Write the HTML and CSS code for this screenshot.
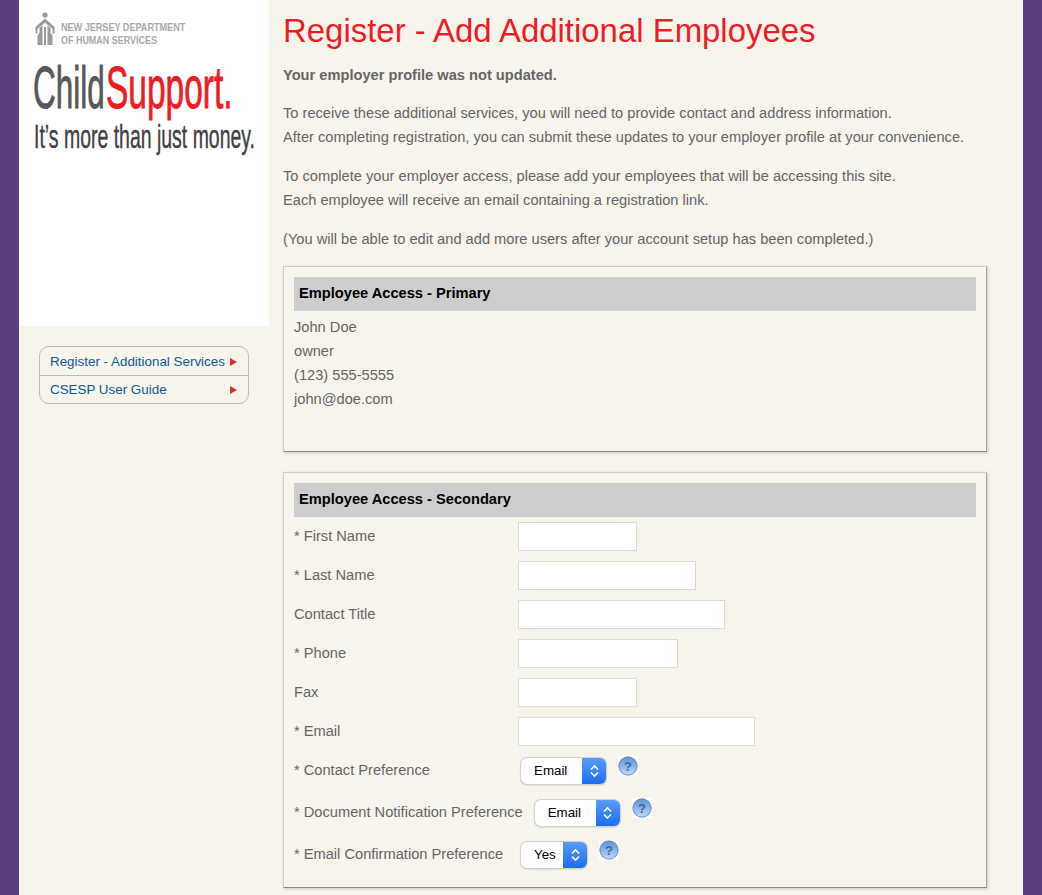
FILE: index.html
```html
<!DOCTYPE html>
<html lang="en">
<head>
<meta charset="utf-8">
<title>Register - Add Additional Employees</title>
<link rel="stylesheet" href="styles.css">
</head>
<body>
<div class="page">
  <aside class="sidebar">
    <div class="logo">
      <svg class="logo-svg" width="250" height="170" viewBox="0 0 250 170">
        <g fill="#9a9a9a">
          <circle cx="26" cy="15" r="2.6"/>
          <path d="M26 18.5 L35.5 27 L35.5 33.5 L33.5 33.5 L33.5 29 L26 22.5 L18.5 29 L18.5 33.5 L16.5 33.5 L16.5 27 Z"/>
          <path d="M23.5 25.5 L23.5 45 L18.5 45 L18.5 35.5 L20.5 33 L20.5 28 Z"/>
          <path d="M28.5 25.5 L28.5 45 L33.5 45 L33.5 35.5 L31.5 33 L31.5 28 Z"/>
          <rect x="25" y="27" width="2" height="18"/>
        </g>
        <text class="dept" transform="translate(42 31) scale(.826 1)">NEW JERSEY DEPARTMENT</text>
        <text class="dept" transform="translate(42 44) scale(.816 1)">OF HUMAN SERVICES</text>
        <text class="child" transform="translate(14 108) scale(.525 1)">Child</text>
        <text class="support" transform="translate(87 108) scale(.558 1)">Support.</text>
        <text class="tagline" transform="translate(15 148) scale(.59 1)">It’s more than just money.</text>
      </svg>
    </div>
    <nav class="side-nav">
      <a class="nav-row" href="#"><span>Register - Additional Services</span><i class="tri"></i></a>
      <a class="nav-row" href="#"><span>CSESP User Guide</span><i class="tri"></i></a>
    </nav>
  </aside>
  <main class="content">
    <h1>Register - Add Additional Employees</h1>
    <p class="warn">Your employer profile was not updated.</p>
    <p class="intro">To receive these additional services, you will need to provide contact and address information.<br>After completing registration, you can submit these updates to your employer profile at your convenience.</p>
    <p class="intro second">To complete your employer access, please add your employees that will be accessing this site.<br>Each employee will receive an email containing a registration link.</p>
    <p class="note">(You will be able to edit and add more users after your account setup has been completed.)</p>

    <section class="box primary">
      <h2>Employee Access - Primary</h2>
      <div class="contact">John Doe<br>owner<br>(123) 555-5555<br>john@doe.com</div>
    </section>

    <section class="box secondary">
      <h2>Employee Access - Secondary</h2>
      <div class="form">
        <label class="row"><span class="lbl">* First Name</span><input class="in w119" type="text"></label>
        <label class="row"><span class="lbl">* Last Name</span><input class="in w178" type="text"></label>
        <label class="row"><span class="lbl">Contact Title</span><input class="in w207" type="text"></label>
        <label class="row"><span class="lbl">* Phone</span><input class="in w160" type="text"></label>
        <label class="row"><span class="lbl">Fax</span><input class="in w119" type="text"></label>
        <label class="row"><span class="lbl">* Email</span><input class="in w237" type="text"></label>

        <div class="row sel-row">
          <span class="lbl">* Contact Preference</span>
          <div class="select s85"><span class="val">Email</span><span class="stepper"><svg width="11" height="16" viewBox="0 0 11 16"><path d="M2 6.5 L5.5 3 L9 6.5 M2 9.5 L5.5 13 L9 9.5" fill="none" stroke="#fff" stroke-width="1.6"/></svg></span></div>
          <svg class="help" width="20" height="20" viewBox="0 0 20 20"><use href="#q"/><text x="10" y="14.5" class="qm">?</text></svg>
        </div>
        <div class="row sel-row">
          <span class="lbl auto">* Document Notification Preference</span>
          <div class="select s85"><span class="val">Email</span><span class="stepper"><svg width="11" height="16" viewBox="0 0 11 16"><path d="M2 6.5 L5.5 3 L9 6.5 M2 9.5 L5.5 13 L9 9.5" fill="none" stroke="#fff" stroke-width="1.6"/></svg></span></div>
          <svg class="help" width="20" height="20" viewBox="0 0 20 20"><use href="#q"/><text x="10" y="14.5" class="qm">?</text></svg>
        </div>
        <div class="row sel-row">
          <span class="lbl">* Email Confirmation Preference</span>
          <div class="select s66"><span class="val">Yes</span><span class="stepper"><svg width="11" height="16" viewBox="0 0 11 16"><path d="M2 6.5 L5.5 3 L9 6.5 M2 9.5 L5.5 13 L9 9.5" fill="none" stroke="#fff" stroke-width="1.6"/></svg></span></div>
          <svg class="help" width="20" height="20" viewBox="0 0 20 20"><use href="#q"/><text x="10" y="14.5" class="qm">?</text></svg>
        </div>
      </div>
    </section>
  </main>
</div>
<svg class="defs" width="0" height="0">
  <defs>
    <linearGradient id="qg" x1="0" y1="0" x2="0" y2="1">
      <stop offset="0" stop-color="#5e93d6"/>
      <stop offset="0.55" stop-color="#8db8e8"/>
      <stop offset="1" stop-color="#c2dbf6"/>
    </linearGradient>
    <g id="q"><circle cx="10" cy="10" r="9.2" fill="url(#qg)" stroke="#4f7fbe" stroke-width="0.8"/></g>
  </defs>
</svg>
</body>
</html>
```
FILE: styles.css
```css
* { box-sizing: border-box; }
html, body { margin: 0; height: 895px; overflow: hidden; }
body { background: #5b4080; font-family: "Liberation Sans", Arial, sans-serif; font-size: 14.65px; color: #666; }
.page { margin: 0 19px; width: 1004px; height: 895px; background: #f7f4ec; display: flex; }
.sidebar { width: 250px; flex: none; }
.logo { height: 326px; background: #fff; }
.logo-svg { display: block; }
.dept { font: bold 11px "Liberation Sans", sans-serif; fill: #a9a9a9; }
.child { font: 60px "Liberation Sans", sans-serif; fill: #58585a; stroke: #58585a; stroke-width: .9; }
.support { font: 60px "Liberation Sans", sans-serif; fill: #ed1c24; stroke: #ed1c24; stroke-width: .9; }
.tagline { font: 33px "Liberation Sans", sans-serif; fill: #414042; stroke: #414042; stroke-width: .4; }
.side-nav { margin: 20px 0 0 20px; width: 210px; height: 58px; border: 1px solid #bdbab4; border-radius: 10px; display: flex; flex-direction: column; }
.nav-row { flex: 1; display: flex; align-items: center; justify-content: space-between; padding: 0 11px 0 10px; color: #0f5a94; text-decoration: none; font-size: 13.4px; white-space: nowrap; }
.nav-row:first-child { padding-top: 1px; }
.nav-row + .nav-row { border-top: 1px solid #bdbab4; }
.tri { width: 0; height: 0; border-left: 7px solid #dc2e2e; border-top: 4px solid transparent; border-bottom: 4px solid transparent; }
.content { flex: none; width: 704px; margin-left: 14px; }
h1 { margin: 12px 0 0; font-size: 32.93px; line-height: 38px; font-weight: 400; color: #ee1c25; white-space: nowrap; }
p { margin: 0; line-height: 24px; white-space: nowrap; }
.warn { margin-top: 13px; font-weight: bold; }
.intro { margin-top: 14px; }
.intro.second { margin-top: 15px; }
.note { margin-top: 15px; }
.box { background: #f7f4ec; border: 1px solid #d0ccc0; border-right-color: #a8a59d; border-bottom-color: #8a8880; box-shadow: 1px 1px 3px rgba(0,0,0,.18); padding: 10px; margin-top: 15px; }
.primary { height: 186px; }
.secondary { margin-top: 20px; height: 416px; }
h2 { margin: 0; height: 34px; line-height: 32px; background: #cdcdcd; color: #000; font-size: 14.65px; font-weight: bold; padding-left: 5px; }
.contact { line-height: 24px; margin-top: 4px; }
.form { display: flex; flex-direction: column; }
.row { display: flex; align-items: center; height: 39px; }
.lbl { width: 224px; flex: none; margin-bottom: 2px; }
.lbl.auto { width: auto; margin-right: 9px; }
.in { height: 29px; background: #fff; border: 1px solid #dedbd3; margin: 0; padding: 0; }
.w119 { width: 119px; } .w178 { width: 178px; } .w207 { width: 207px; } .w160 { width: 160px; } .w237 { width: 237px; }
.row.sel-row { height: 42px; }
.row.sel-row:first-of-type { margin-top: -1px; }
.select { height: 26px; margin-left: 3px; display: flex; justify-content: space-between; background: #fff; border-radius: 6px; box-shadow: 0 0 0 1px #d4d1ca, 0 1px 2px rgba(0,0,0,.3); color: #000; font-size: 13.33px; }
.s85 { width: 85px; }
.s66 { width: 66px; }
.val { padding-left: 13px; line-height: 26px; }
.stepper { width: 24px; display: flex; align-items: center; justify-content: center; border-radius: 0 6px 6px 0; background: linear-gradient(#5a9cf8, #1c6cf2); }
.help { margin-left: 12px; margin-top: -10px; flex: none; background: #fff; }
.qm { font: bold 13px "Liberation Sans", sans-serif; fill: #47689a; text-anchor: middle; }
.defs { position: absolute; }
```
